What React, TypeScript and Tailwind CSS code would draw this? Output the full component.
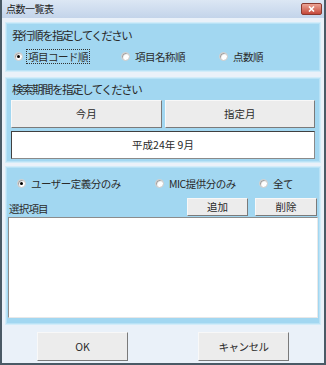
import type { ReactNode } from 'react';

const FONT = { fontFamily: '"Noto Sans CJK JP", "Noto Sans", sans-serif' };

/** Small Windows-style radio bullet. */
function Radio({ checked, children, focused }: { checked?: boolean; children: ReactNode; focused?: boolean }) {
  return (
    <label className="flex items-center gap-[3px]">
      <span className="flex h-[9px] w-[9px] items-center justify-center rounded-full border border-[#c9c9c9] bg-white shadow-[inset_1px_1px_1px_#9a9a9a]">
        {checked && <span className="h-[3px] w-[3px] rounded-full bg-black" />}
      </span>
      <span
        className={`text-[10.5px] leading-[13px] tracking-[-0.5px] ${
          focused ? 'border border-dotted border-[#333] px-[1px]' : 'px-[2px]'
        }`}
      >
        {children}
      </span>
    </label>
  );
}

function Panel({ className, children }: { className?: string; children: ReactNode }) {
  return (
    <div className={`border border-[#d2ecf9] bg-[#a2d7f1] shadow-[inset_0_0_0_1px_#b9e2f6] ${className ?? ''}`}>
      {children}
    </div>
  );
}

function Btn({ className, children }: { className?: string; children: ReactNode }) {
  return (
    <button
      type="button"
      className={`flex items-center justify-center border border-[#f8f8f8] border-r-[#7a7a7a] border-b-[#7a7a7a] bg-[#ececec] text-[10.5px] text-[#2a2a2a] ${className ?? ''}`}
    >
      {children}
    </button>
  );
}

export default function App() {
  return (
    <div
      style={FONT}
      className="flex h-[365px] w-[326px] flex-col border-x-2 border-b-2 border-[#4a5a66] bg-[#eaf1f9] text-[11px] text-[#2a2a2a]"
    >
      {/* Title bar */}
      <div className="flex h-[18px] items-center justify-between bg-gradient-to-b from-[#dce7f4] to-[#c3d4ea] pl-[4px] pr-[2px]">
        <span className="text-[10px] leading-none tracking-[-0.5px] text-[#1c1c1c]">点数一覧表</span>
        <span className="flex h-[12px] w-[21px] items-center justify-center rounded-[2px] border border-[#8a3a30] bg-gradient-to-b from-[#eba395] to-[#c4473a]">
          <svg width="7" height="6" viewBox="0 0 7 6">
            <path d="M1 0.5 L6 5.5 M6 0.5 L1 5.5" stroke="white" strokeWidth="1.6" />
          </svg>
        </span>
      </div>

      <div className="flex flex-1 flex-col px-[3px] pt-[4px]">
        {/* 発行順 */}
        <Panel className="h-[50px] px-[6px] pt-[3px]">
          <div className="text-[11.5px] leading-[18px] tracking-[-1.5px]">発行順を指定してください</div>
          <div className="mt-[5px] flex items-center pl-[2px]">
            <div className="w-[107px]">
              <Radio checked focused>項目コード順</Radio>
            </div>
            <div className="w-[98px]">
              <Radio>項目名称順</Radio>
            </div>
            <Radio>点数順</Radio>
          </div>
        </Panel>

        {/* 検索期間 */}
        <Panel className="mt-[5px] h-[86px] px-[5px] pt-[2px]">
          <div className="pl-[1px] text-[11.5px] leading-[18px] tracking-[-1.5px]">検索期間を指定してください</div>
          <div className="mt-[2px] flex gap-[3px]">
            <Btn className="h-[28px] flex-1">今月</Btn>
            <Btn className="h-[28px] flex-1">指定月</Btn>
          </div>
          <div className="mt-[3px] flex h-[28px] items-center justify-center border border-[#404040] border-r-[#8a8a8a] border-b-[#8a8a8a] bg-white text-[10.5px]">
            平成24年 9月
          </div>
        </Panel>

        {/* 選択項目 */}
        <Panel className="mt-[3px] h-[159px] px-[2px] pt-[10px]">
          <div className="flex items-center pl-[9px]">
            <div className="w-[138px]">
              <Radio checked>ユーザー定義分のみ</Radio>
            </div>
            <div className="w-[104px]">
              <Radio>MIC提供分のみ</Radio>
            </div>
            <Radio>全て</Radio>
          </div>
          <div className="mt-[8px] flex items-end justify-between">
            <span className="pl-[1px] text-[10.5px] leading-[14px] tracking-[-0.8px]">選択項目</span>
            <div className="flex gap-[7px] pr-[1px]">
              <Btn className="h-[18px] w-[61px]">追加</Btn>
              <Btn className="h-[18px] w-[62px]">削除</Btn>
            </div>
          </div>
          <div className="mt-[1px] h-[101px] border border-[#8c8c8c] border-r-[#e8e8e8] border-b-[#e8e8e8] bg-white" />
        </Panel>

        {/* Footer */}
        <div className="mt-[7px] flex pl-[32px]">
          <Btn className="h-[29px] w-[91px]">OK</Btn>
          <Btn className="ml-[70px] h-[29px] w-[91px] text-[9.5px] tracking-[-0.5px]">キャンセル</Btn>
        </div>
      </div>
    </div>
  );
}
